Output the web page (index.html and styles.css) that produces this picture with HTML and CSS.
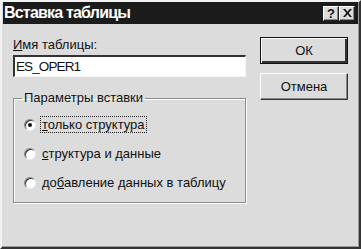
FILE: index.html
```html
<!DOCTYPE html>
<html lang="ru">
<head>
    <meta charset="UTF-8">
    <meta name="viewport" content="width=device-width, initial-scale=1.0">
    <title>Вставка таблицы</title>
    <link rel="stylesheet" href="styles.css">
</head>
<body>
    <div class="window">
        <div class="titlebar">
            <span class="title">Вставка таблицы</span>
            <div class="caption-btns">
                <span class="cap-btn">?</span>
                <span class="cap-btn">
                    <svg width="9" height="8" viewBox="0 0 9 8">
                        <path d="M0 0h2.2L4.5 2.8 6.8 0H9L5.6 4 9 8H6.8L4.5 5.2 2.2 8H0l3.4-4z" fill="#111"/>
                    </svg>
                </span>
            </div>
        </div>
        <div class="content">
            <div class="left">
                <label class="field-label"><u>И</u>мя таблицы:</label>
                <div class="textbox">ES_OPER1</div>
                <fieldset class="group">
                    <legend>Параметры вставки</legend>
                    <div class="opt">
                        <span class="radio checked"></span>
                        <span class="opt-text focused"><u>т</u>олько структура</span>
                    </div>
                    <div class="opt">
                        <span class="radio"></span>
                        <span class="opt-text"><u>с</u>труктура и данные</span>
                    </div>
                    <div class="opt">
                        <span class="radio"></span>
                        <span class="opt-text">до<u>б</u>авление данных в таблицу</span>
                    </div>
                </fieldset>
            </div>
            <div class="right">
                <div class="btn default"><span>ОК</span></div>
                <div class="btn"><span>Отмена</span></div>
            </div>
        </div>
    </div>
</body>
</html>
```

FILE: styles.css
```css
* {
    margin: 0;
    padding: 0;
    box-sizing: border-box;
}

body {
    background-color: #dcdcdc;
    font: normal 13px "Liberation Sans", Arial, sans-serif;
    color: #111;
}

.window {
    width: 361px;
    height: 249px;
    background-color: #dcdcdc;
    border-top: 2px solid #f2f2f2;
    border-left: 2px solid #f2f2f2;
    border-right: 2px solid #333;
    border-bottom: 2px solid #333;
    box-shadow: inset -1px -1px 0 #999;
}

.titlebar {
    height: 22px;
    margin: 0 1px 0 1px;
    background-color: #1b1b1b;
    display: flex;
    align-items: center;
    justify-content: space-between;
    padding: 0 3px 0 1px;
}

.title {
    color: white;
    font-weight: bold;
    font-size: 16px;
    letter-spacing: -0.8px;
}

.caption-btns {
    display: flex;
    gap: 0;
}

.cap-btn {
    width: 16px;
    height: 15px;
    background-color: #dcdcdc;
    border-top: 1px solid #fff;
    border-left: 1px solid #fff;
    border-right: 1px solid #222;
    border-bottom: 1px solid #222;
    box-shadow: inset -1px -1px 0 #888;
    display: flex;
    align-items: center;
    justify-content: center;
    font-weight: bold;
    font-size: 13px;
    line-height: 1;
}

.content {
    display: flex;
    padding: 13px 0 0 11px;
}

.left {
    width: 233px;
}

.field-label {
    display: block;
    height: 18px;
    line-height: 15px;
}

.textbox {
    height: 22px;
    background-color: white;
    border-top: 2px solid #333;
    border-left: 2px solid #333;
    border-right: 1px solid #f4f4f4;
    border-bottom: 1px solid #f4f4f4;
    padding: 1px 0 0 1px;
    font-size: 13.5px;
    letter-spacing: -0.9px;
    line-height: 17px;
}

.group {
    margin-top: 14px;
    border: 1px solid #8c8c8c;
    box-shadow: 1px 1px 0 #fff, inset 1px 1px 0 #fff;
    padding: 5px 0 5px 10px;
}

.group legend {
    margin-left: -2px;
    padding: 0 2px;
    line-height: 14px;
}

.opt {
    display: flex;
    align-items: center;
    height: 29px;
}

.radio {
    width: 12px;
    height: 12px;
    border-radius: 50%;
    background-color: white;
    border: 1px solid;
    border-color: #888 #eee #eee #888;
    box-shadow: inset 1px 1px 0 #333;
    margin-right: 4px;
    position: relative;
}

.radio.checked::after {
    content: "";
    position: absolute;
    left: 3px;
    top: 3px;
    width: 4px;
    height: 4px;
    border-radius: 50%;
    background-color: #111;
}

.opt-text {
    padding: 0 1px;
    line-height: 15px;
    border: 1px dotted transparent;
}

.opt-text.focused {
    border-color: #222;
}

.right {
    margin-left: 14px;
}

.btn {
    width: 88px;
    height: 27px;
    margin-bottom: 9px;
    background-color: #dcdcdc;
    border-top: 1px solid #fff;
    border-left: 1px solid #fff;
    border-right: 1px solid #333;
    border-bottom: 1px solid #333;
    box-shadow: inset -1px -1px 0 #888;
    display: flex;
    align-items: center;
    justify-content: center;
}

.btn.default {
    border: 1px solid #111;
    box-shadow: inset 1px 1px 0 #fff, inset -2px -2px 0 #333;
}
```
